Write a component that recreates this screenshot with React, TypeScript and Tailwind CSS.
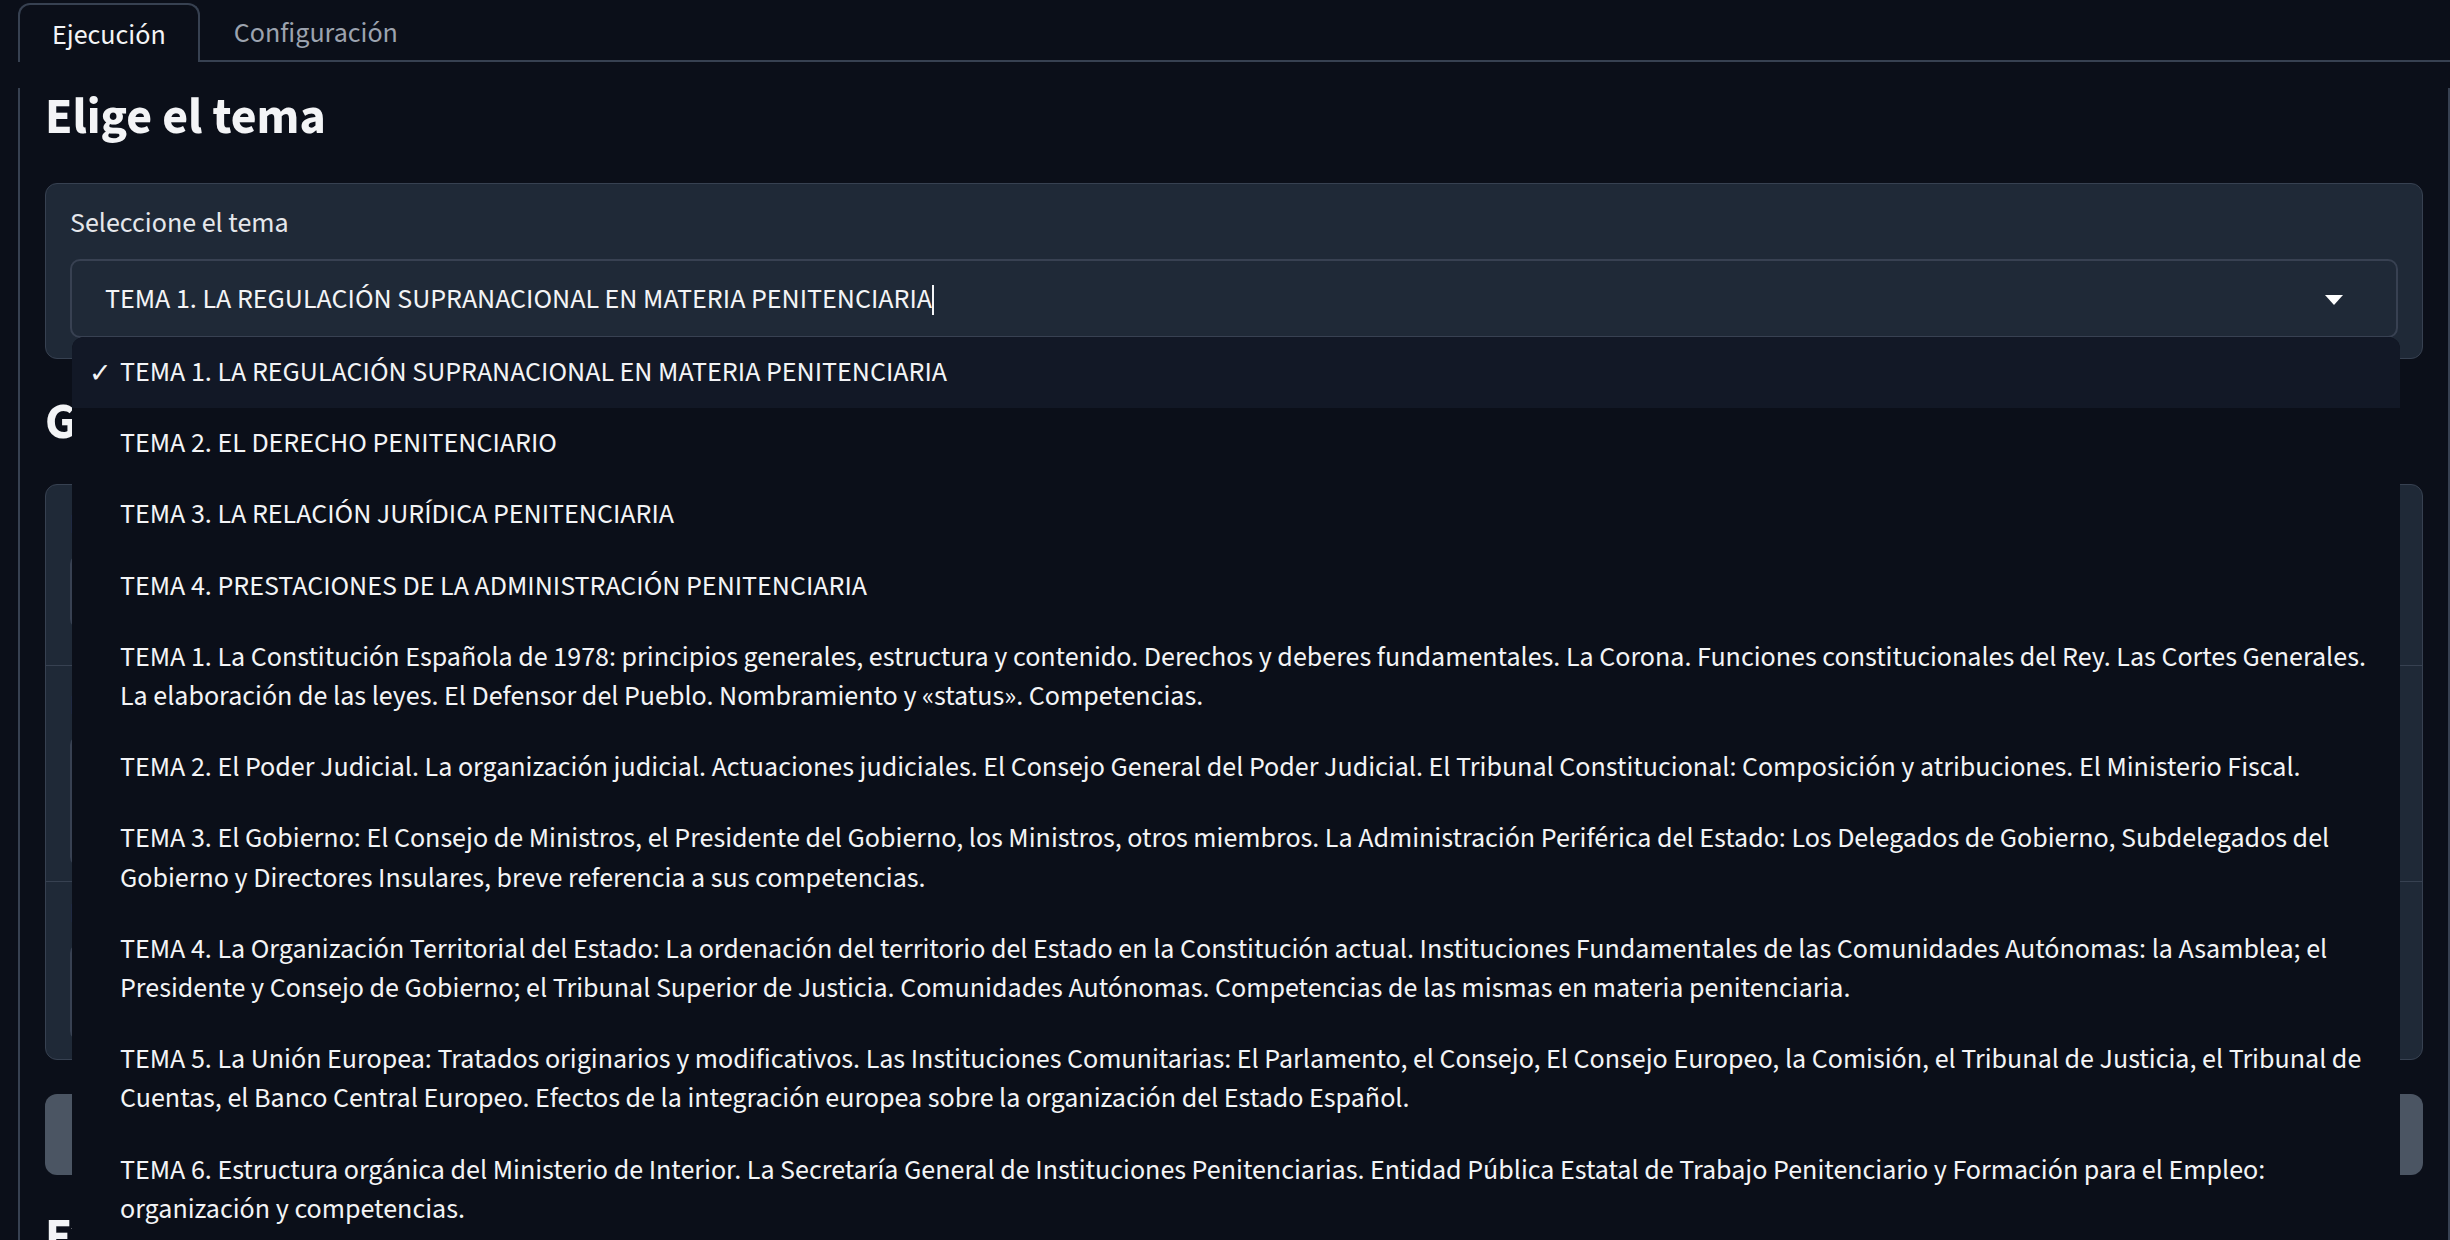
import { useState } from "react";

const temas = [
  "TEMA 1. LA REGULACIÓN SUPRANACIONAL EN MATERIA PENITENCIARIA",
  "TEMA 2. EL DERECHO PENITENCIARIO",
  "TEMA 3. LA RELACIÓN JURÍDICA PENITENCIARIA",
  "TEMA 4. PRESTACIONES DE LA ADMINISTRACIÓN PENITENCIARIA",
  "TEMA 1. La Constitución Española de 1978: principios generales, estructura y contenido. Derechos y deberes fundamentales. La Corona. Funciones constitucionales del Rey. Las Cortes Generales. La elaboración de las leyes. El Defensor del Pueblo. Nombramiento y «status». Competencias.",
  "TEMA 2. El Poder Judicial. La organización judicial. Actuaciones judiciales. El Consejo General del Poder Judicial. El Tribunal Constitucional: Composición y atribuciones. El Ministerio Fiscal.",
  "TEMA 3. El Gobierno: El Consejo de Ministros, el Presidente del Gobierno, los Ministros, otros miembros. La Administración Periférica del Estado: Los Delegados de Gobierno, Subdelegados del Gobierno y Directores Insulares, breve referencia a sus competencias.",
  "TEMA 4. La Organización Territorial del Estado: La ordenación del territorio del Estado en la Constitución actual. Instituciones Fundamentales de las Comunidades Autónomas: la Asamblea; el Presidente y Consejo de Gobierno; el Tribunal Superior de Justicia. Comunidades Autónomas. Competencias de las mismas en materia penitenciaria.",
  "TEMA 5. La Unión Europea: Tratados originarios y modificativos. Las Instituciones Comunitarias: El Parlamento, el Consejo, El Consejo Europeo, la Comisión, el Tribunal de Justicia, el Tribunal de Cuentas, el Banco Central Europeo. Efectos de la integración europea sobre la organización del Estado Español.",
  "TEMA 6. Estructura orgánica del Ministerio de Interior. La Secretaría General de Instituciones Penitenciarias. Entidad Pública Estatal de Trabajo Penitenciario y Formación para el Empleo: organización y competencias.",
  "TEMA 7. Organización de los Servicios Centrales y Periféricos de la Administración Penitenciaria.",
];

function TemaSelect() {
  const [selected] = useState(0);
  return (
    <div className="relative">
      <div className="flex h-[79px] items-center rounded-[10px] border-2 border-[#384152] bg-[#1f2937] pl-[33px] pr-[53px]">
        <span className="pt-[2px] text-[28px] leading-[39px] text-[#f3f4f6]">{temas[selected]}</span>
        <span className="mt-[2px] h-[30px] w-[2px] bg-[#f3f4f6]" />
        <span className="ml-auto mt-[2px] h-0 w-0 border-x-[9px] border-t-[10px] border-x-transparent border-t-white" />
      </div>

      <ul className="absolute left-[2px] right-[-2px] top-[78px] z-10 overflow-hidden rounded-t-[12px] bg-[#0b0f19]">
        {temas.map((tema, i) => (
          <li
            key={i}
            className={
              "flex py-[16px] pl-[17px] pr-[17px] text-[28px] leading-[39.2px] text-[#f3f4f6] " +
              (i === selected ? "bg-[#121826]" : "")
            }
          >
            <span className="w-[31px] shrink-0 font-['DejaVu_Sans',sans-serif] text-[27px]">{i === selected ? "✓" : ""}</span>
            <span>{tema}</span>
          </li>
        ))}
      </ul>
    </div>
  );
}

export default function App() {
  return (
    <div className="h-screen overflow-hidden bg-[#0b0f19] font-['Source_Sans_3','Source_Sans_Pro',sans-serif] text-[#e5e7eb]">
      <div className="flex h-[62px] items-end pl-[18px]">
        <div className="flex h-[59px] items-center rounded-t-[12px] border-2 border-b-0 border-[#374151] px-[32px] pt-[2px] text-[28px] text-[#f3f4f6]">
          Ejecución
        </div>
        <div className="flex h-[59px] items-center border-b-2 border-[#374151] px-[34px] pt-[2px] text-[28px] text-[#9ca3af]">
          Configuración
        </div>
        <div className="h-[59px] flex-1 border-b-2 border-[#374151]" />
      </div>

      <div className="ml-[18px] h-[1300px] border-x-2 border-[#374151] px-[25px]">
        <h2 className="mt-[26px] text-[50px] font-bold leading-[60px] text-[#f3f4f6]">Elige el tema</h2>

        <div className="mt-[35px] rounded-[12px] border border-[#374151] bg-[#1f2937] px-[24px] pb-[20px] pt-[20px]">
          <label className="block text-[28px] leading-[39px] text-[#e5e7eb]">Seleccione el tema</label>
          <div className="mt-[16px]">
            <TemaSelect />
          </div>
        </div>

        <h2 className="mt-[34px] text-[50px] font-bold leading-[60px] text-[#f3f4f6]">Genera el test</h2>

        <div className="mt-[31px] rounded-[12px] border border-[#374151] bg-[#1f2937]">
          <div className="flex h-[180px] flex-col gap-[10px] px-[24px] pt-[20px]">
            <span className="text-[28px] leading-[39px]">Número de preguntas</span>
            <div className="h-[75px] rounded-[10px] border-2 border-[#384152]" />
          </div>
          <div className="flex h-[216px] flex-col gap-[10px] border-t border-[#374151] px-[24px] pt-[20px]">
            <span className="text-[28px] leading-[39px]">Dificultad</span>
            <div className="h-[132px] rounded-[10px] border-2 border-[#384152]" />
          </div>
          <div className="flex h-[178px] flex-col gap-[10px] border-t border-[#374151] px-[24px] pt-[12px]">
            <span className="text-[28px] leading-[39px]">Modelo</span>
            <div className="h-[98px] rounded-[10px] border-2 border-[#384152]" />
          </div>
        </div>

        <button className="mt-[34px] flex h-[81px] w-full items-center justify-center rounded-[12px] bg-[#4b5563] text-[28px] font-semibold text-white">
          Generar preguntas
        </button>

        <h2 className="mt-[33px] text-[50px] font-bold leading-[60px] text-[#f3f4f6]">Examen</h2>
      </div>
    </div>
  );
}
